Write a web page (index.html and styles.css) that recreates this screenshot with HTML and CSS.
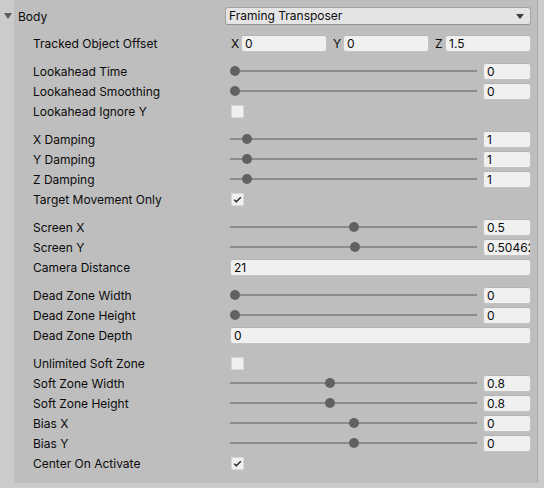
FILE: index.html
```html
<!DOCTYPE html>
<html>
<head>
<meta charset="utf-8">
<link rel="stylesheet" href="styles.css">
</head>
<body>
<div class="frame">
  <div class="panel">
    <div class="header">
      <span class="fold"></span>
      <span class="hlabel">Body</span>
      <div class="dropdown"><span>Framing Transposer</span><span class="arrow"></span></div>
    </div>

    <div class="group">
      <div class="row"><span class="label">Tracked Object Offset</span>
        <div class="control vec3">
          <div class="vc"><span class="axis">X</span><div class="field">0</div></div>
          <div class="vc"><span class="axis">Y</span><div class="field">0</div></div>
          <div class="vc"><span class="axis">Z</span><div class="field">1.5</div></div>
        </div>
      </div>
    </div>

    <div class="group">
      <div class="row"><span class="label">Lookahead Time</span>
        <div class="control slider"><div class="track"><span class="thumb" style="--f:0"></span></div><div class="field num">0</div></div></div>
      <div class="row"><span class="label">Lookahead Smoothing</span>
        <div class="control slider"><div class="track"><span class="thumb" style="--f:0"></span></div><div class="field num">0</div></div></div>
      <div class="row"><span class="label">Lookahead Ignore Y</span>
        <div class="control"><span class="check"></span></div></div>
    </div>

    <div class="group">
      <div class="row"><span class="label">X Damping</span>
        <div class="control slider"><div class="track"><span class="thumb" style="--f:0.05"></span></div><div class="field num">1</div></div></div>
      <div class="row"><span class="label">Y Damping</span>
        <div class="control slider"><div class="track"><span class="thumb" style="--f:0.05"></span></div><div class="field num">1</div></div></div>
      <div class="row"><span class="label">Z Damping</span>
        <div class="control slider"><div class="track"><span class="thumb" style="--f:0.05"></span></div><div class="field num">1</div></div></div>
      <div class="row"><span class="label">Target Movement Only</span>
        <div class="control"><span class="check on"><svg viewBox="0 0 13 13" width="13" height="13"><path d="M3.2 6.8 L5.3 8.8 L9.8 4.2" fill="none" stroke="#222" stroke-width="1.4"/></svg></span></div></div>
    </div>

    <div class="group">
      <div class="row"><span class="label">Screen X</span>
        <div class="control slider"><div class="track"><span class="thumb" style="--f:0.5"></span></div><div class="field num">0.5</div></div></div>
      <div class="row"><span class="label">Screen Y</span>
        <div class="control slider"><div class="track"><span class="thumb" style="--f:0.50462"></span></div><div class="field num">0.50462</div></div></div>
      <div class="row"><span class="label">Camera Distance</span>
        <div class="control"><div class="field wide">21</div></div></div>
    </div>

    <div class="group">
      <div class="row"><span class="label">Dead Zone Width</span>
        <div class="control slider"><div class="track"><span class="thumb" style="--f:0"></span></div><div class="field num">0</div></div></div>
      <div class="row"><span class="label">Dead Zone Height</span>
        <div class="control slider"><div class="track"><span class="thumb" style="--f:0"></span></div><div class="field num">0</div></div></div>
      <div class="row"><span class="label">Dead Zone Depth</span>
        <div class="control"><div class="field wide">0</div></div></div>
    </div>

    <div class="group">
      <div class="row"><span class="label">Unlimited Soft Zone</span>
        <div class="control"><span class="check"></span></div></div>
      <div class="row"><span class="label">Soft Zone Width</span>
        <div class="control slider"><div class="track"><span class="thumb" style="--f:0.4"></span></div><div class="field num">0.8</div></div></div>
      <div class="row"><span class="label">Soft Zone Height</span>
        <div class="control slider"><div class="track"><span class="thumb" style="--f:0.4"></span></div><div class="field num">0.8</div></div></div>
      <div class="row"><span class="label">Bias X</span>
        <div class="control slider"><div class="track"><span class="thumb" style="--f:0.5"></span></div><div class="field num">0</div></div></div>
      <div class="row"><span class="label">Bias Y</span>
        <div class="control slider"><div class="track"><span class="thumb" style="--f:0.5"></span></div><div class="field num">0</div></div></div>
      <div class="row"><span class="label">Center On Activate</span>
        <div class="control"><span class="check on"><svg viewBox="0 0 13 13" width="13" height="13"><path d="M3.2 6.8 L5.3 8.8 L9.8 4.2" fill="none" stroke="#222" stroke-width="1.4"/></svg></span></div></div>
    </div>
  </div>
</div>
</body>
</html>
```

FILE: styles.css
```css
* { box-sizing: border-box; }
html, body { margin: 0; padding: 0; }
body {
  background: #cbcbcb;
  font-family: Inter, "Noto Sans", sans-serif;
  font-size: 12px;
  color: #0b0b0b;
  width: 544px;
  height: 488px;
  overflow: hidden;
}
.frame {
  display: flex;
  height: 488px;
  align-items: flex-start;
}
.panel {
  position: relative;
  margin-left: 14px;
  width: 524px;
  height: 483px;
  background: #bebebe;
  border-right: 1px solid #a9a9a9;
  padding: 7px 6px 9px 0;
}
.header {
  display: flex;
  align-items: center;
  height: 18px;
  margin-bottom: 2px;
}
.fold {
  position: absolute;
  left: -10px;
  top: 13px;
  width: 0; height: 0;
  border-left: 4px solid transparent;
  border-right: 4px solid transparent;
  border-top: 6px solid #5a5a5a;
}
.hlabel {
  width: 211px;
  padding-left: 4px;
}
.dropdown {
  flex: 1;
  height: 18px;
  background: #e4e4e4;
  border: 1px solid #a3a3a3;
  border-bottom-color: #939393;
  border-radius: 3px;
  display: flex;
  align-items: center;
  justify-content: space-between;
  padding: 0 6px 0 3px;
  line-height: 16px;
}
.arrow {
  width: 0; height: 0;
  border-left: 4px solid transparent;
  border-right: 4px solid transparent;
  border-top: 5px solid #3c3c3c;
}
.group { margin-top: 8px; }
.row {
  display: flex;
  align-items: center;
  height: 20px;
  padding-left: 19px;
}
.label {
  width: 197px;
  flex: none;
  white-space: nowrap;
}
.control {
  flex: 1;
  display: flex;
  align-items: center;
  min-width: 0;
}
.field {
  height: 17px;
  background: #f0f0f0;
  border: 1px solid #c2c2c2;
  border-top-color: #b4b4b4;
  border-radius: 3px;
  padding: 0 3px;
  line-height: 15px;
  overflow: hidden;
  white-space: nowrap;
  font-size: 12px;
}
.wide { flex: 1; }
.num { width: 48px; flex: none; }
.vec3 {
  display: grid;
  grid-template-columns: 1fr 1fr 1fr;
  column-gap: 6px;
  margin-left: 1px;
}
.vc {
  display: flex;
  align-items: center;
}
.axis {
  width: 10px;
  flex: none;
}
.vc .field { flex: 1; min-width: 0; }
.slider { gap: 6px; }
.track {
  position: relative;
  flex: 1;
  height: 2px;
  background: #8c8c8c;
}
.thumb {
  position: absolute;
  top: -4px;
  left: calc(var(--f) * (100% - 10px));
  width: 10px;
  height: 10px;
  border-radius: 50%;
  background: #616161;
}
.check {
  display: block;
  width: 13px;
  height: 13px;
  margin-left: 1px;
  background: #f0f0f0;
  border-radius: 2px;
  box-shadow: inset 0 0 0 1px #d6d6d6;
}
.check svg { display: block; }
```
